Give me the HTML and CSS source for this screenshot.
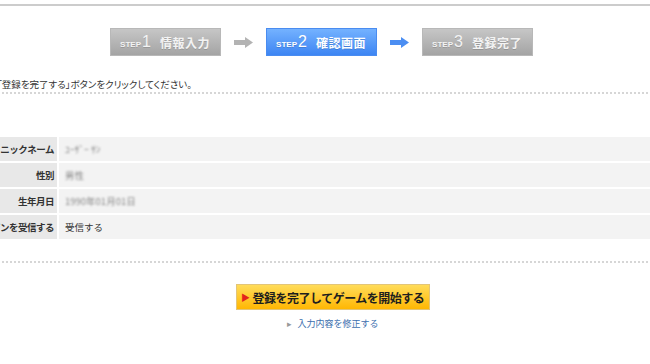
FILE: index.html
```html
<!DOCTYPE html>
<html lang="ja">
<head>
    <meta charset="UTF-8">
    <title>登録内容の確認</title>
    <link rel="stylesheet" href="styles.css">
</head>
<body>
    <div class="page">
        <div class="steps">
            <div class="step">
                <span class="step-no"><small>STEP</small>1</span>
                <span class="step-name">情報入力</span>
            </div>
            <svg class="arrow" width="19" height="11" viewBox="0 0 19 11">
                <path d="M0 3h11V0l8 5.5-8 5.5V8H0z" fill="#b3b3b3"/>
            </svg>
            <div class="step current">
                <span class="step-no"><small>STEP</small>2</span>
                <span class="step-name">確認画面</span>
            </div>
            <svg class="arrow" width="19" height="11" viewBox="0 0 19 11">
                <path d="M0 3h11V0l8 5.5-8 5.5V8H0z" fill="#4b8ef2"/>
            </svg>
            <div class="step">
                <span class="step-no"><small>STEP</small>3</span>
                <span class="step-name">登録完了</span>
            </div>
        </div>

        <p class="lead">「登録を完了する」ボタンをクリックしてください。</p>

        <div class="info">
            <div class="info-row">
                <div class="info-label">ニックネーム</div>
                <div class="info-value"><span class="masked">ﾕｰｻﾞｰ ｻﾝ</span></div>
            </div>
            <div class="info-row">
                <div class="info-label">性別</div>
                <div class="info-value"><span class="masked">男性</span></div>
            </div>
            <div class="info-row">
                <div class="info-label">生年月日</div>
                <div class="info-value"><span class="masked">1990年01月01日</span></div>
            </div>
            <div class="info-row">
                <div class="info-label">メールマガジンを受信する</div>
                <div class="info-value">受信する</div>
            </div>
        </div>

        <div class="actions">
            <button class="submit"><span class="tri">▶</span>登録を完了してゲームを開始する</button>
            <a class="back" href="#">入力内容を修正する</a>
        </div>
    </div>
</body>
</html>
```

FILE: styles.css
```css
html, body {
    margin: 0;
    overflow: hidden;
    background: #fff;
}

body {
    font-family: "Noto Sans CJK JP", sans-serif;
    color: #333;
}

.page {
    width: 790px;
    margin-left: -62px;
    padding-top: 4px;
}

.steps {
    display: flex;
    align-items: center;
    justify-content: center;
    gap: 13px;
    border-top: 2px solid #cccccc;
    padding: 22px 24px 0 0;
}

.step {
    width: 109px;
    height: 26px;
    display: flex;
    align-items: center;
    justify-content: center;
    gap: 9px;
    background: linear-gradient(#c6c6c6, #a4a4a4);
    border: 1px solid #b8b8b8;
    color: #f3f3f3;
    text-shadow: 0 1px 0 rgba(0, 0, 0, 0.15);
}

.step.current {
    background: linear-gradient(#74b2ff, #3d85f3);
    border-color: #4a8cf0;
    color: #fff;
}

.step-no {
    font-family: "Liberation Sans", Arial, sans-serif;
    font-size: 16px;
    line-height: 1;
}

.step-no small {
    font-size: 8px;
    font-weight: bold;
    margin-right: 1px;
}

.step-name {
    font-size: 12px;
    font-weight: bold;
    letter-spacing: 0.5px;
}

.arrow {
    display: block;
}

.lead {
    margin: 22px 0 0;
    padding: 0 0 1px 59px;
    font-size: 9.5px;
    font-feature-settings: "palt";
    line-height: 13px;
    border-bottom: 2px dotted #d6d6d6;
}

.info {
    display: flex;
    flex-direction: column;
    gap: 2px;
    margin-top: 43px;
}

.info-row {
    display: grid;
    grid-template-columns: 119px 1fr;
    gap: 2px;
    height: 24px;
}

.info-label {
    background: #e8e8e8;
    text-align: right;
    padding-right: 3px;
    font-size: 9.5px;
    font-weight: bold;
    letter-spacing: -0.5px;
    line-height: 24px;
    white-space: nowrap;
}

.info-value {
    background: #f3f3f3;
    padding-left: 6px;
    font-size: 9.5px;
    line-height: 24px;
}

.masked {
    color: #8a8a8a;
    filter: blur(1px);
}

.actions {
    border-top: 2px dotted #d6d6d6;
    margin-top: 22px;
    padding-top: 21px;
    display: flex;
    flex-direction: column;
    align-items: center;
}

.submit {
    width: 194px;
    height: 26px;
    padding: 0 0 0 4px;
    display: flex;
    align-items: center;
    gap: 3px;
    background: linear-gradient(#ffdc5a, #ffb703);
    border: 1px solid #e3c577;
    font-family: "Noto Sans CJK JP", sans-serif;
    font-size: 12px;
    font-weight: bold;
    letter-spacing: -0.5px;
    white-space: nowrap;
    color: #1e1e1e;
    cursor: pointer;
}

.tri {
    color: #e3231b;
    font-size: 9px;
}

.back {
    margin-top: 7px;
    font-size: 9px;
    color: #3b6fae;
    text-decoration: none;
}

.back::before {
    content: "▸";
    color: #999;
    margin-right: 5px;
}
```
